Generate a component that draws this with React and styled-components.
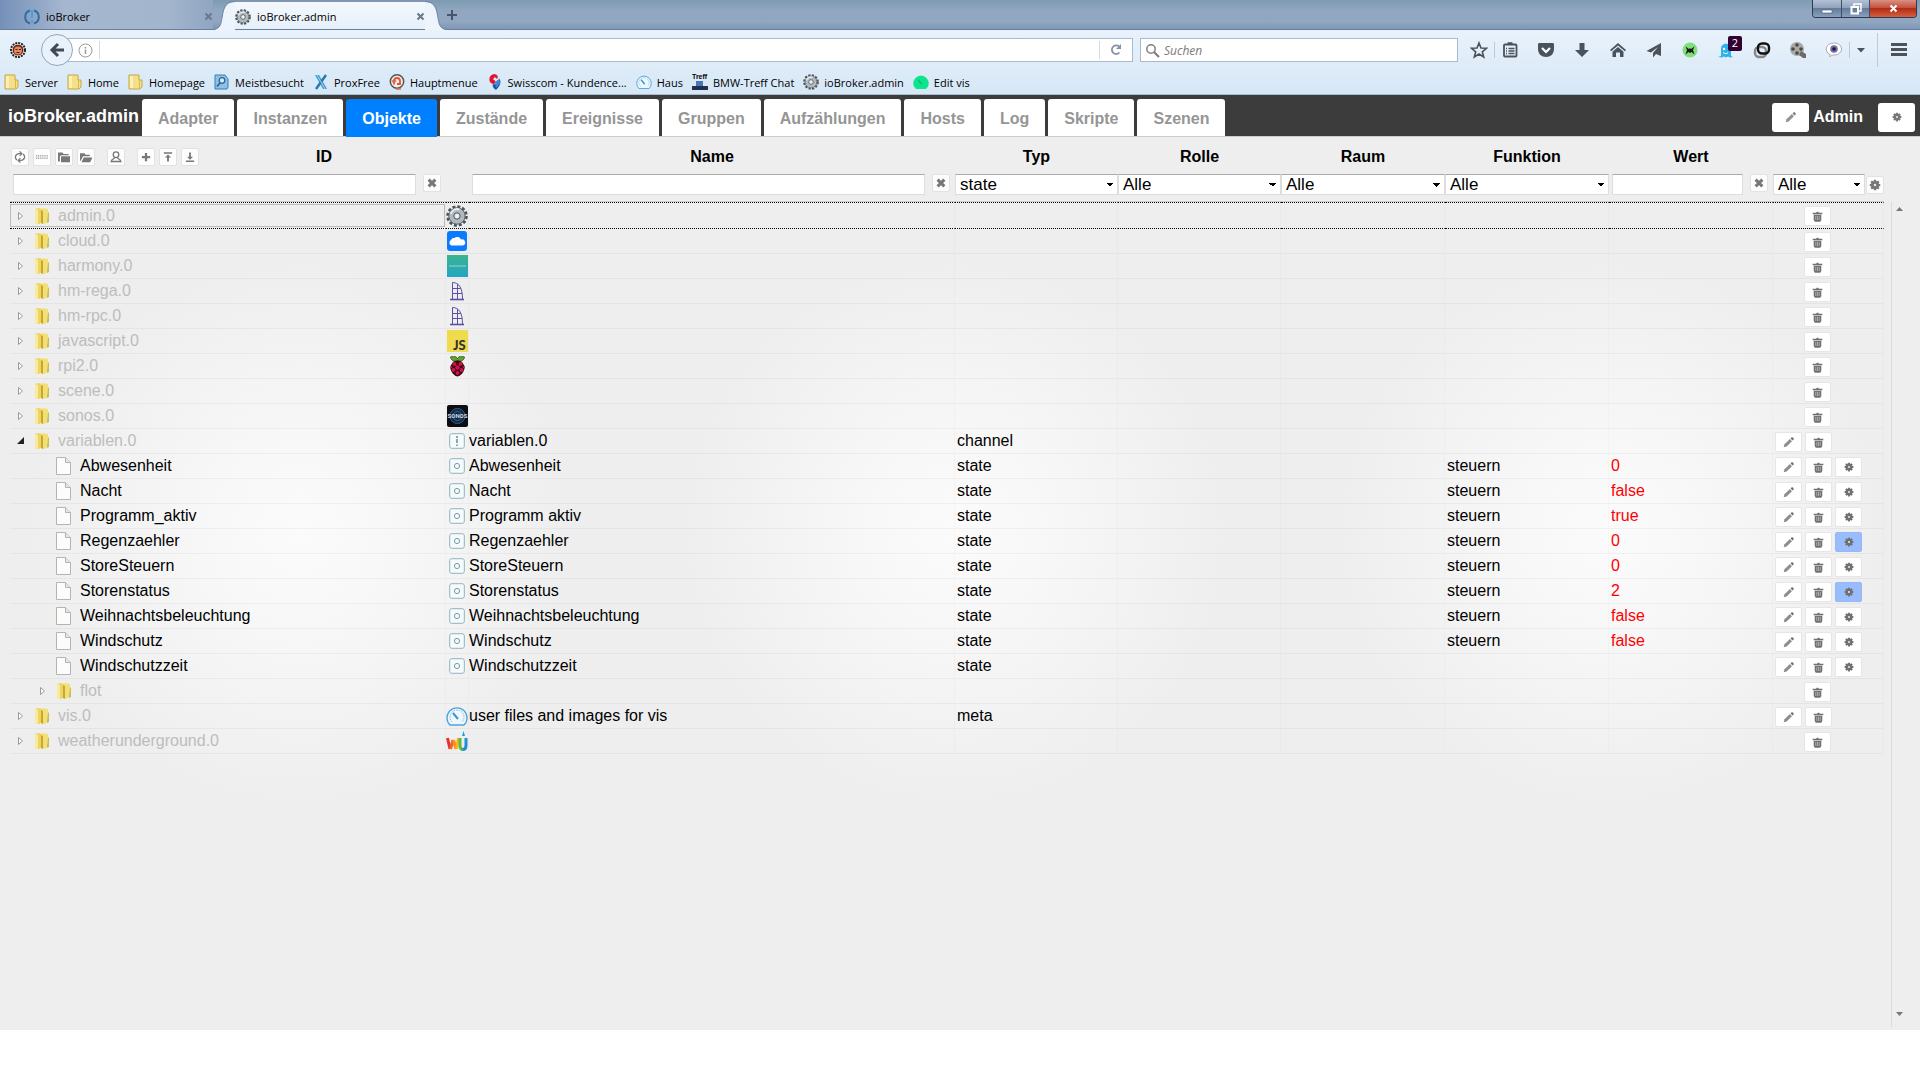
import styled, { createGlobalStyle, css } from 'styled-components';

const GlobalStyle = createGlobalStyle`
  *, *::before, *::after { box-sizing: border-box; }

  body {
    margin: 0;
    background: #fff;
    color: #000;
    font-family: 'Liberation Sans', Arial, sans-serif;
    font-size: 16px;
  }

  button, input, select { font: inherit; margin: 0; padding: 0; }
  button { border: 0; background: none; color: inherit; }
  a { color: inherit; text-decoration: none; }
  svg { display: block; flex: none; }
`;

const Page = styled.div`
  display: flex;
  flex-direction: column;
  min-height: 100vh;
  padding-bottom: 50px;
`;

/* ---------- browser window ---------- */

const chromeFont = css`
  font-family: 'Open Sans', 'Noto Sans', sans-serif;
  font-size: 11px;
`;

const TitleBar = styled.div`
  ${chromeFont}
  display: flex;
  height: 30px;
  border-bottom: 1px solid #66809f;
  background: linear-gradient(#7d9bb1, #92a8c2 40%, #90a6c1 75%, #7f97b5);
`;

const BrowserTab = styled.div`
  display: flex;
  align-items: center;
  gap: 6px;
  height: 29px;
  padding: 4px 0 0;
  width: ${(props) => (props.$active ? '190px' : '213px')};
  ${(props) =>
    props.$active
      ? 'background: linear-gradient(#f3f8fd, #e6f0fa); border-top: 2px solid #8196b0; padding-top: 2px;'
      : 'padding-left: 24px; background: linear-gradient(90deg, #7590b8, #a5b6cf 30%, #a3b4cd 80%, #8fa5c2);'}
`;

const TabTitle = styled.span`
  flex: 1;
`;

const TabClose = styled.button`
  display: flex;
`;

const NewTab = styled.button`
  display: flex;
  align-items: center;
`;

const WindowButtons = styled.div`
  display: flex;
  height: 18px;
  margin-left: auto;
  margin-right: 3px;
  border: 1px solid #2c3b52;
  border-top: 0;
  border-radius: 0 0 4px 4px;
  overflow: hidden;
`;

const WindowButton = styled.button`
  display: flex;
  align-items: center;
  justify-content: center;
  width: ${(props) => (props.$close ? '47px' : '28px')};
  border-left: ${(props) => (props.$first ? '0' : '1px solid #3d4d66')};
  background: ${(props) =>
    props.$close
      ? 'linear-gradient(#d99083, #c4513c 45%, #b32c14 50%, #d4603f)'
      : 'linear-gradient(#b3c1d3, #8fa3bc 45%, #647c9b 50%, #8aa0bb)'};
`;

const Chrome = styled.div`
  ${chromeFont}
  height: 65px;
  border-bottom: 1px solid #a9bccf;
  background: linear-gradient(#e9f2fb, #d6e7f6);
`;

const NavBar = styled.div`
  display: flex;
  align-items: center;
  height: 40px;
  padding: 0 12px 0 10px;
`;

const BackButton = styled.button`
  display: flex;
  align-items: center;
  justify-content: center;
  width: 32px;
  height: 32px;
  margin-left: 15px;
  margin-right: -12px;
  z-index: 1;
  border: 1px solid #93a6bb;
  border-radius: 50%;
  background: #e9f2fb;
`;

const UrlBar = styled.div`
  display: flex;
  align-items: center;
  flex: 1;
  height: 24px;
  padding-left: 16px;
  border: 1px solid #a8bacd;
  background: #fff;
`;

const UrlInput = styled.input`
  flex: 1;
  min-width: 0;
  height: 18px;
  margin-left: 6px;
  border: 0;
  border-left: 1px solid #d5dbe2;
  outline: 0;
`;

const Reload = styled.button`
  display: flex;
  align-items: center;
  justify-content: center;
  width: 33px;
  height: 18px;
  border-left: 1px solid #d5dbe2;
`;

const SearchBox = styled.label`
  display: flex;
  align-items: center;
  gap: 4px;
  width: 318px;
  height: 24px;
  margin: 0 12px 0 7px;
  padding-left: 4px;
  border: 1px solid #a8bacd;
  background: #fff;
`;

const SearchInput = styled.input`
  flex: 1;
  min-width: 0;
  border: 0;
  outline: 0;
  font-size: 12px;
  &::placeholder {
    color: #7a7a7a;
    font-style: italic;
    opacity: 1;
  }
`;

const ToolIcons = styled.div`
  display: flex;
  align-items: center;
  gap: 18px;
`;

const ToolIcon = styled.button`
  position: relative;
  display: flex;
  align-items: center;
  justify-content: center;
  width: 18px;
  height: 18px;
`;

const StarGroup = styled.div`
  display: flex;
  align-items: center;
  gap: 6px;
  margin-right: -12px;
`;

const Separator = styled.span`
  width: 1px;
  height: ${(props) => (props.$tall ? '34px' : '16px')};
  background: #bccbdb;
`;

const Badge = styled.span`
  position: absolute;
  left: 11px;
  top: -5px;
  width: 14px;
  height: 15px;
  border-radius: 2px;
  background: #330033;
  color: #fff;
  line-height: 14px;
`;

const MenuEnd = styled.div`
  display: flex;
  align-items: center;
  gap: 12px;
  margin-left: -12px;
`;

const OverflowButton = styled.button`
  display: flex;
  margin-left: -5px;
`;

const Bookmarks = styled.nav`
  display: flex;
  align-items: center;
  gap: 9px;
  height: 24px;
  padding-left: 4px;
`;

const Bookmark = styled.a`
  display: flex;
  align-items: center;
  gap: 5px;
  white-space: nowrap;
`;

/* ---------- application ---------- */

const Header = styled.header`
  display: flex;
  align-items: flex-end;
  height: 42px;
  padding: 0 5px 0 8px;
  background: #3c3c3c;
  border-bottom: 1px solid #ccc;
`;

const Brand = styled.h1`
  width: 134px;
  margin: 0;
  color: #fff;
  font-size: 18px;
  line-height: 20px;
  padding-bottom: 10px;
`;

const Tabs = styled.nav`
  display: flex;
  gap: 3px;
  flex: 1;
`;

const Tab = styled.a`
  height: 37px;
  padding: 0 16px;
  border-radius: 3px 3px 0 0;
  background: ${(props) => (props.$active ? '#007fff' : '#fff')};
  color: ${(props) => (props.$active ? '#fff' : '#959595')};
  font-weight: bold;
  line-height: 39px;
  margin-bottom: ${(props) => (props.$active ? '-1px' : '0')};
  ${(props) => props.$active && 'height: 38px;'}
`;

const UserArea = styled.div`
  display: flex;
  align-items: center;
  align-self: center;
  padding-top: 3px;
  color: #fff;
  font-weight: bold;
`;

const HeaderButton = styled.button`
  display: flex;
  align-items: center;
  justify-content: center;
  width: 37px;
  height: 29px;
  border-radius: 3px;
  background: #fff;
  color: #777;
`;

const UserName = styled.span`
  padding: 0 15px 0 4px;
`;

const Main = styled.main`
  display: flex;
  flex: 1;
  padding: 3px 0 3px 10px;
  background: radial-gradient(
      circle 275px at 328px 395px,
      #fbfbfb,
      #f8f8f8 30%,
      #eee
    )
    -28px 0 / 655px 100% repeat-x;
`;

const TreeArea = styled.div`
  flex: 1;
  min-width: 0;
`;

const Table = styled.table`
  width: 100%;
  table-layout: fixed;
  border-spacing: 0;
`;

const Col = styled.col`
  width: ${(props) => props.$width};
`;

const HeadCell = styled.th`
  height: 34px;
  padding: 0;
`;

const HeadFlex = styled.div`
  display: flex;
  align-items: center;
`;

const HeadLabel = styled.span`
  flex: 1;
  text-align: center;
`;

const Toolbar = styled.div`
  display: flex;
  gap: ${(props) => (props.$inner ? '4px' : '12px')};
  ${(props) => !props.$inner && 'width: 192px; padding-left: 1px;'}
`;

const SmallButton = styled.button`
  display: flex;
  align-items: center;
  justify-content: center;
  flex: none;
  width: 18px;
  height: 18px;
  border: 1px solid #e2e2e2;
  border-radius: 2px;
  background: #fdfdfd;
  color: #777;
`;

const FilterCell = styled.td`
  height: 28px;
  padding: 0;
  vertical-align: top;
  border-bottom: 1px solid #ccc;
`;

const FilterRow = styled.div`
  display: flex;
  gap: ${(props) => (props.$tight ? '1px' : '7px')};
  padding: ${(props) => (props.$tight ? '0' : '0 5px 0 3px')};
  align-items: ${(props) => (props.$tight ? 'center' : 'flex-start')};
`;

const FilterInput = styled.input`
  flex: 1;
  min-width: 0;
  height: 21px;
  padding: 0 4px;
  border: 1px solid #ddd;
  border-top-color: #aaa;
  background: #fff;
`;

const FilterSelect = styled.select`
  flex: 1;
  width: 100%;
  min-width: 0;
  height: 21px;
  padding: 0 4px;
  appearance: none;
  border: 1px solid #ddd;
  border-top-color: #aaa;
  border-radius: 0;
  background: linear-gradient(to bottom left, #000 50%, transparent 50%) right
      7px center / 4px 4px no-repeat,
    linear-gradient(to bottom right, #000 50%, transparent 50%) right 3px
      center / 4px 4px no-repeat,
    #fff;
  color: #000;
  font-size: 17px;
  line-height: 19px;
`;

const Cell = styled.td`
  height: 25px;
  padding: 0 0 0 ${(props) => (props.$flush ? '0' : '2px')};
  border-bottom: 1px solid rgba(0, 0, 0, 0.035);
  border-right: 1px solid rgba(0, 0, 0, 0.02);
  line-height: 20px;
  white-space: nowrap;
  overflow: hidden;
`;

const Row = styled.tr`
  ${(props) =>
    props.$focused &&
    css`
      ${Cell} {
        height: 27px;
        border-top: 1px dotted #000;
        border-bottom: 1px dotted #000;
      }
    `}
`;

const TreeNode = styled.div`
  display: flex;
  align-items: center;
  height: 23px;
  padding-left: ${(props) => (props.$level ? '28px' : '6px')};
  border: 1px solid ${(props) => (props.$focused ? '#bbb' : 'transparent')};
  color: ${(props) => (props.$folder ? '#bdbdbd' : '#000')};
`;

const Expander = styled.button`
  display: flex;
  align-items: center;
  width: 17px;
  height: 16px;
`;

const NodeIcon = styled.span`
  display: flex;
  width: 16px;
  margin-right: 8px;
`;

const IconBox = styled.div`
  display: flex;
  align-items: center;
  justify-content: center;
  height: 22px;
`;

const ValueCell = styled(Cell)`
  color: #f00;
`;

const Actions = styled.div`
  display: flex;
  gap: 3px;
  padding-top: 1px;
`;

const ActionButton = styled.button`
  display: flex;
  align-items: center;
  justify-content: center;
  width: 27px;
  height: 20px;
  padding-top: 1px;
  border: 1px solid ${(props) => (props.$on ? '#94b8f8' : '#e6e6e6')};
  border-radius: 2px;
  background: ${(props) => (props.$on ? '#99bdfc' : '#fff')};
  color: #707070;
`;

const ActionSpacer = styled.span`
  width: 26px;
`;

const ScrollBar = styled.div`
  display: flex;
  flex-direction: column;
  justify-content: space-between;
  width: 29px;
  margin-top: 62px;
  margin-left: 7px;
  padding: 2px 0 8px 2px;
  border-left: 1px solid #dcdcdc;
  background: #eee;
`;

const ScrollButton = styled.button`
  display: flex;
  align-items: center;
  justify-content: center;
  width: 10px;
  height: 10px;
`;

/* ---------- icons ---------- */

const glyphs = {
  refresh: (
    <g fill="none" stroke="currentColor" strokeWidth="1.6">
      <path d="M4 12C0 9 2 3.5 7 3.5h2.500M12 4C16 7 14 12.500 9 12.500H6.500" />
      <path d="M7.500 .5l3 3-3 3M8.500 15.500l-3-3 3-3" />
    </g>
  ),
  list: (
    <path
      d="M0 6.500h16M0 9.500h16"
      stroke="currentColor"
      strokeWidth="1.300"
      strokeDasharray="1.500 1"
    />
  ),
  folder: (
    <g fill="currentColor">
      <path d="M0 2h6l1.500 2H14v1.500H4L2.500 7v7H0z" />
      <path d="M4 7h12v8H4z" />
    </g>
  ),
  folderOpen: (
    <g fill="currentColor">
      <path d="M0 3h6l1.500 2H13v2H4l-3 6H0z" />
      <path d="M5 8.500h11.500L13.500 15H2z" />
    </g>
  ),
  person: (
    <g fill="none" stroke="currentColor" strokeWidth="1.700">
      <circle cx="8" cy="5" r="3.700" />
      <path d="M6 8.500c0 2.500-4 2-4.500 5.500h13c-.5-3.500-4.500-3-4.500-5.500M1 14h14" />
    </g>
  ),
  plus: <path d="M6.500 2.500h3v4h4v3h-4v4h-3v-4h-4v-3h4z" fill="currentColor" />,
  stopUp: (
    <path
      d="M2.500 1.500h11v2h-11zM8 4.500l4 4H9.200V14H6.800V8.500H4z"
      fill="currentColor"
    />
  ),
  stopDown: (
    <path
      d="M2.500 12.500h11v2h-11zM8 11.500l-4-4h2.800V2h2.400v5.500H12z"
      fill="currentColor"
    />
  ),
  close: (
    <path
      d="M3.500 3.500l9 9M12.500 3.500l-9 9"
      stroke="currentColor"
      strokeWidth="4"
    />
  ),
  pencil: (
    <g fill="currentColor">
      <path d="M1 15l1.200-4.300L10 3l3 3-7.700 7.800z" opacity=".8" />
      <path d="M11 2l1.500-1.500h1.500l1.500 1.500v1.500L14 5z" />
    </g>
  ),
  trash: (
    <g fill="currentColor">
      <path d="M1 2.500H6l1-1.500h2l1 1.500h5v2.300H1z" />
      <path d="M2.500 5.500h11V13l-1.500 2.500H4L2.500 13z" />
      <path d="M5.500 7v6M8 7v6M10.500 7v6" stroke="#ddd" strokeWidth=".8" />
    </g>
  ),
  gear: (
    <g>
      <path
        d="M8 1v14M1 8h14M3 3l10 10M13 3L3 13"
        stroke="currentColor"
        strokeWidth="3"
      />
      <circle cx="8" cy="8" r="4" fill="none" stroke="currentColor" strokeWidth="3" />
      <circle cx="8" cy="8" r="1.600" fill="#eee" />
    </g>
  ),
};

function Glyph({ name, size = 12 }) {
  return (
    <svg width={size} height={size} viewBox="0 0 16 16" aria-hidden="true">
      {glyphs[name]}
    </svg>
  );
}

function FolderIcon() {
  return (
    <svg width="16" height="18" viewBox="0 0 16 18">
      <path d="M1 2l4-1 3 1v13l-3 2-4-1z" fill="#ecd465" />
      <path d="M1 2l3 1v14l-3-1z" fill="#f8ec9c" />
      <path d="M7 3l2-2 5 1v13l-4 2-3-1z" fill="#f3df78" />
      <path d="M7 3l2 1v13l-2-1z" fill="#c8a72c" />
      <path d="M14 5l1 1v9l-2 1z" fill="#d9bb44" />
      <path d="M13 12h2v2h-2z" fill="#9cc7a0" />
    </svg>
  );
}

function PageIcon() {
  return (
    <svg width="15" height="18" viewBox="0 0 15 18">
      <path d="M.5 .5h9l5 5v12H.5z" fill="#fcfcfa" stroke="#b4b4b4" />
      <path d="M9.500 .5v5h5" fill="#e6e6e6" stroke="#b4b4b4" />
    </svg>
  );
}

function ExpanderIcon({ open }) {
  return (
    <svg width="8" height="10" viewBox="0 0 8 10">
      {open ? (
        <path d="M7 1v7H0z" fill="#222" />
      ) : (
        <path d="M1.500 1.500v7l4-3.500z" fill="#fff" stroke="#9a9a9a" />
      )}
    </svg>
  );
}

function CogLogo({ size = 22 }) {
  return (
    <svg width={size} height={size} viewBox="0 0 22 22">
      <circle
        cx="11"
        cy="11"
        r="9"
        fill="none"
        stroke="#4d5358"
        strokeWidth="3.500"
        strokeDasharray="2.900 1.812"
      />
      <circle cx="11" cy="11" r="8.200" fill="#b0b8c0" stroke="#5d646b" />
      <path d="M4.500 9a7 7 0 0 1 9-4.500" stroke="#e6eaee" strokeWidth="2" fill="none" />
      <circle cx="11" cy="11" r="3.200" fill="#e3e7ea" stroke="#4d5358" />
      <circle cx="11" cy="11" r="1" fill="#fff" />
    </svg>
  );
}

function GaugeLogo({ size = 22, filled }) {
  return (
    <svg width={size} height={size} viewBox="0 0 22 22">
      <path
        d="M4 20a10 10 0 1 1 14 0z"
        fill={filled ? '#0be58d' : '#eef7fd'}
        stroke={filled ? '#0be58d' : '#4fa3dc'}
        strokeWidth="1.300"
      />
      {!filled && (
        <path
          d="M6 17a7 7 0 1 1 10 0"
          fill="none"
          stroke="#7cbbe6"
          strokeDasharray="1.500 1"
        />
      )}
      <path
        d="M7 8l5 6"
        stroke={filled ? '#17b877' : '#3f94d0'}
        strokeWidth="2"
      />
    </svg>
  );
}

const adapterIcons = {
  admin: <CogLogo />,
  cloud: (
    <svg width="20" height="20" viewBox="0 0 20 20">
      <rect width="20" height="20" rx="3" fill="#0a7bff" />
      <path
        d="M4.500 14.500a3 3 0 0 1-.5-5.500 3 3 0 0 1 3.500-2 4 4 0 0 1 6.500 1.500 3 3 0 0 1 2 6z"
        fill="#fff"
      />
    </svg>
  ),
  harmony: (
    <svg width="21" height="22" viewBox="0 0 21 22">
      <defs>
        <linearGradient id="harmony" x2="0" y2="1">
          <stop offset="0" stopColor="#3bb38e" />
          <stop offset="1" stopColor="#22a5c4" />
        </linearGradient>
      </defs>
      <rect width="21" height="22" fill="url(#harmony)" />
      <path d="M2 11h17" stroke="#8fd6d0" />
    </svg>
  ),
  homematic: (
    <svg width="16" height="20" viewBox="0 0 16 20">
      <g fill="none" stroke="#5d4fa3">
        <path d="M3.500 18V1.500C10 1.500 13.500 7 13.500 18" />
        <path d="M8.500 3v15M3 7.500h8.500M3 12.500h10" />
        <path d="M1 18.500h14" strokeWidth="1.600" />
      </g>
    </svg>
  ),
  javascript: (
    <svg width="21" height="22" viewBox="0 0 21 22">
      <rect width="21" height="22" fill="#f0db4f" />
      <text
        x="6"
        y="20"
        fontFamily="Lato, sans-serif"
        fontWeight="900"
        fontSize="13"
        fill="#323330"
      >
        JS
      </text>
    </svg>
  ),
  rpi: (
    <svg width="17" height="21" viewBox="0 0 17 21">
      <path
        d="M8.500 5C6 6 2 5 1.500 1 4-.5 7 0 8.500 2.500 10 0 13-.5 15.500 1 15 5 11 6 8.500 5z"
        fill="#5aa52e"
        stroke="#26350f"
        strokeWidth=".7"
      />
      <path
        d="M8.500 4.500c3 0 5 1.500 6 4 2 2 1 5 0 7-1 2-4 5-6 5s-5-3-6-5c-1-2-2-5 0-7 1-2.500 3-4 6-4z"
        fill="#3a0614"
      />
      <g fill="#d2134a">
        <circle cx="5.500" cy="8" r="2" />
        <circle cx="11.500" cy="8" r="2" />
        <circle cx="8.500" cy="11.500" r="2.200" />
        <circle cx="4.500" cy="14" r="2" />
        <circle cx="12.500" cy="14" r="2" />
        <circle cx="8.500" cy="17" r="2" />
        <circle cx="2.500" cy="11" r="1" />
        <circle cx="14.500" cy="11" r="1" />
      </g>
    </svg>
  ),
  sonos: (
    <svg width="21" height="22" viewBox="0 0 21 22">
      <rect width="21" height="22" rx="2" fill="#0b0d11" />
      <circle cx="10.500" cy="11" r="7.500" fill="#14293e" stroke="#2c5f8c" />
      <circle cx="10.500" cy="11" r="4.500" fill="none" stroke="#2c6aa0" />
      <text
        x="10.500"
        y="13"
        textAnchor="middle"
        fontFamily="Roboto, sans-serif"
        fontWeight="bold"
        fontSize="6"
        fill="#c9d6e2"
      >
        SONOS
      </text>
    </svg>
  ),
  channel: (
    <svg width="16" height="16" viewBox="0 0 16 16">
      <rect x=".7" y=".7" width="14.600" height="14.600" rx="2" fill="#f6fafb" stroke="#8fb3bf" />
      <path d="M8 3v2M8 6v4M8 11.500v1.500" stroke="#3f7f95" strokeWidth="1.300" />
    </svg>
  ),
  state: (
    <svg width="16" height="16" viewBox="0 0 16 16">
      <rect x=".7" y=".7" width="14.600" height="14.600" rx="2" fill="#f6fafb" stroke="#8fb3bf" />
      <circle cx="8" cy="8" r="2.600" fill="none" stroke="#6f9fae" />
    </svg>
  ),
  vis: <GaugeLogo />,
  wu: (
    <svg width="22" height="20" viewBox="0 0 22 20" fill="none" strokeWidth="3">
      <path d="M1.500 7l2.500 11" stroke="#e5312b" />
      <path d="M4.500 18l2.500-9" stroke="#f0622a" />
      <path d="M7.500 9l2.500 9" stroke="#f78f1e" />
      <path d="M10.500 18l2-11" stroke="#fbb615" />
      <path d="M14 7v7c0 3 1 4.500 3 4.500" stroke="#5cb947" />
      <path d="M16.500 18.500c2.500 0 3.500-1.500 3.500-4V7" stroke="#1e8fd5" />
      <path d="M17.500 0l1.500 5h-3z" fill="#1e9fe0" />
    </svg>
  ),
};

/* ---------- data ---------- */

const bookmarkIcons = {
  folder: (
    <svg width="16" height="16" viewBox="0 0 16 16">
      <path d="M1 1h10v5h3v7l-2 2H1z" fill="#f5e08a" stroke="#c9a63f" />
      <path d="M11.500 6v9" stroke="#d9b94e" />
      <path d="M2 2h3v12H2z" fill="#fbf0b5" />
    </svg>
  ),
  smart: (
    <svg width="16" height="16" viewBox="0 0 16 16">
      <path d="M1 1h10l3 4v8l-1 2H1z" fill="#8fc0e6" stroke="#3d7db3" />
      <circle cx="8" cy="6.500" r="2.800" fill="#d5eaf9" stroke="#2a679c" strokeWidth="1.300" />
      <path d="M6 9l-3 3.500" stroke="#2a679c" strokeWidth="1.800" />
    </svg>
  ),
  prox: (
    <svg width="16" height="16" viewBox="0 0 16 16">
      <path d="M2 1h4l8 14h-4z" fill="#3f9bd0" />
      <path d="M13 1L3 15" stroke="#2d77ad" strokeWidth="2.500" />
      <path d="M4 1l8 14" stroke="#a5d5f0" />
    </svg>
  ),
  at: (
    <svg width="16" height="16" viewBox="0 0 16 16" fill="none">
      <circle cx="8" cy="7.500" r="6.700" fill="#f2eeec" stroke="#555" strokeWidth="1.500" />
      <path d="M5 10.500V7a3 3 0 0 1 6 0v3H8" stroke="#dd5733" strokeWidth="1.800" />
      <path d="M3 6.500l2 2.500 2-2.500M7 15h5" stroke="#e06a4a" strokeWidth="1.300" />
    </svg>
  ),
  swisscom: (
    <svg width="16" height="16" viewBox="0 0 16 16">
      <path d="M7 0C1 1 1 9 6 10c4 0 3-4 0-4.500C7 2.500 9 3 10 5c2-2 0-5-3-5z" fill="#e2152c" />
      <path d="M12 4c3 4 1 8-3 12-3-2-4-4-3-6 4 1 7-2 6-6z" fill="#1459a8" />
      <path d="M8 8l4-3 1 4-4 5z" fill="#3f8bd6" />
    </svg>
  ),
  haus: <GaugeLogo size={16} />,
  bmw: (
    <svg width="16" height="16" viewBox="0 0 16 16">
      <text x="0" y="5" fontFamily="Liberation Sans, sans-serif" fontWeight="bold" fontSize="7" fill="#000">
        Treff
      </text>
      <path d="M4 7h7v6H4z" fill="#4379b6" />
      <path d="M0 12h16v4H0z" fill="#22304b" />
    </svg>
  ),
  cog: <CogLogo size={16} />,
  edit: <GaugeLogo size={16} filled />,
};

const bookmarks = [
  ['folder', 'Server'],
  ['folder', 'Home'],
  ['folder', 'Homepage'],
  ['smart', 'Meistbesucht'],
  ['prox', 'ProxFree'],
  ['at', 'Hauptmenue'],
  ['swisscom', 'Swisscom - Kundence...'],
  ['haus', 'Haus'],
  ['bmw', 'BMW-Treff Chat'],
  ['cog', 'ioBroker.admin'],
  ['edit', 'Edit vis'],
];

const ink = '#4a525b';

const toolIcons = [
  [
    'Lesezeichen',
    <g key="i" fill="none" stroke={ink} strokeWidth="1.800">
      <rect x="3" y="3.500" width="12.500" height="12" rx="1" />
      <path d="M6.500 2.500h5" strokeWidth="2.500" />
      <path d="M7.500 7.500h6M7.500 10h6M7.500 12.500h6M5 7.500h1M5 10h1M5 12.500h1" strokeWidth="1.300" />
    </g>,
  ],
  [
    'Pocket',
    <g key="i">
      <path d="M1 3.500C1 2.500 1.500 2 2.500 2h13c1 0 1.500.5 1.500 1.500V8c0 5-3.500 8-8 8s-8-3-8-8z" fill={ink} />
      <path d="M5 7l4 4 4-4" fill="none" stroke="#fff" strokeWidth="2.200" />
    </g>,
  ],
  [
    'Downloads',
    <path key="i" d="M6.500 2h5v7H16l-7 7-7-7h4.500z" fill={ink} />,
  ],
  [
    'Startseite',
    <g key="i" fill={ink}>
      <path d="M9 2l8 7-1.200 1.300L9 4.500l-6.800 5.800L1 9z" />
      <path d="M9 6l5.500 4.700V16h-3.500v-4.500H7V16H3.500v-5.300z" />
    </g>,
  ],
  [
    'Senden',
    <path key="i" d="M16 2v13l-5-2-3 3.500V12l5-6-7 5.500L1.500 10z" fill={ink} />,
  ],
  [
    'Erweiterung',
    <g key="i">
      <circle cx="9" cy="9" r="7.500" fill="#7fe07a" />
      <path d="M4.500 5.500L8 8l1-1 1 1 3.500-2.500-1.500 3.500 1.500 4.500L10.500 11 9 12l-1.500-1-3 2.500L6 9z" fill="#1c1c1c" />
    </g>,
  ],
  [
    'Ghostery',
    <g key="i">
      <path d="M4 8c0-7 10-7 10 0v7l2 1-3 .5-2-1-2 1-2-1-2 1-4-.5 3-1z" fill="#2fb1ea" />
      <circle cx="7" cy="8" r="1.200" fill="#fff" />
      <path d="M6 11.500c2 1.500 4 1.500 5 0" stroke="#fff" fill="none" />
    </g>,
    '2',
  ],
  [
    'Link',
    <g key="i" fill="none" strokeWidth="2.400">
      <rect x="2" y="6" width="11" height="10" rx="4" stroke="#888" />
      <rect x="5" y="2.500" width="11" height="10" rx="4" stroke="#111" />
    </g>,
  ],
  [
    'Video',
    <g key="i">
      <circle cx="8" cy="8" r="7" fill="#a9a9a6" />
      <g fill="#4a4a4a">
        <circle cx="8" cy="4" r="1.800" />
        <circle cx="4" cy="8" r="1.800" />
        <circle cx="12" cy="8" r="1.800" />
        <circle cx="8" cy="12" r="1.800" />
      </g>
      <path d="M12 10l5 3v4h-3l-4-3z" fill="#6e6a66" />
    </g>,
  ],
  [
    'Augen',
    <g key="i">
      <path d="M9 2c10 0 10 12 0 12-2 0-3 0-4 2v-2.500C-1 11 0 2 9 2z" fill="#fff" stroke="#a9a9a9" />
      <circle cx="9" cy="8" r="3.800" fill="#766da8" />
      <circle cx="9" cy="8" r="1.800" fill="#20183a" />
    </g>,
  ],
];

const tabs = [
  'Adapter',
  'Instanzen',
  'Objekte',
  'Zustände',
  'Ereignisse',
  'Gruppen',
  'Aufzählungen',
  'Hosts',
  'Log',
  'Skripte',
  'Szenen',
];

const rows = [
  { id: 'admin.0', folder: true, icon: 'admin', focused: true },
  { id: 'cloud.0', folder: true, icon: 'cloud' },
  { id: 'harmony.0', folder: true, icon: 'harmony' },
  { id: 'hm-rega.0', folder: true, icon: 'homematic' },
  { id: 'hm-rpc.0', folder: true, icon: 'homematic' },
  { id: 'javascript.0', folder: true, icon: 'javascript' },
  { id: 'rpi2.0', folder: true, icon: 'rpi' },
  { id: 'scene.0', folder: true },
  { id: 'sonos.0', folder: true, icon: 'sonos' },
  { id: 'variablen.0', folder: true, open: true, icon: 'channel', name: 'variablen.0', type: 'channel' },
  { id: 'Abwesenheit', func: 'steuern', value: '0' },
  { id: 'Nacht', func: 'steuern', value: 'false' },
  { id: 'Programm_aktiv', name: 'Programm aktiv', func: 'steuern', value: 'true' },
  { id: 'Regenzaehler', func: 'steuern', value: '0', custom: true },
  { id: 'StoreSteuern', func: 'steuern', value: '0' },
  { id: 'Storenstatus', func: 'steuern', value: '2', custom: true },
  { id: 'Weihnachtsbeleuchtung', func: 'steuern', value: 'false' },
  { id: 'Windschutz', func: 'steuern', value: 'false' },
  { id: 'Windschutzzeit' },
  { id: 'flot', folder: true, level: 1 },
  { id: 'vis.0', folder: true, icon: 'vis', name: 'user files and images for vis', type: 'meta' },
  { id: 'weatherunderground.0', folder: true, icon: 'wu' },
];

/* ---------- components ---------- */

function TabCurve({ flip }) {
  return (
    <svg width="22" height="30" viewBox="0 0 22 30">
      <g transform={flip ? 'translate(22 0) scale(-1 1)' : undefined}>
        <path d="M0 30C8 29 8 23 9.500 15 11 6 14 2 22 2v28z" fill="#edf4fb" />
        <path
          d="M0 29.500C8 29 8 23 9.500 15 11 6 14 1.500 22 1.500"
          fill="none"
          stroke="#6d84a2"
        />
      </g>
    </svg>
  );
}

function CloseMark({ color = '#6b7789' }) {
  return (
    <svg width="9" height="9" viewBox="0 0 9 9">
      <path d="M1.500 1.500l6 6M7.500 1.500l-6 6" stroke={color} strokeWidth="2" />
    </svg>
  );
}

function BrowserChrome() {
  return (
    <>
      <TitleBar>
        <BrowserTab>
          <svg width="16" height="16" viewBox="0 0 16 16" fill="none">
            <path d="M6 1.500a6.800 6.800 0 0 0 0 13M10 1.500a6.800 6.800 0 0 1 0 13" stroke="#2f6da3" strokeWidth="2" />
            <path d="M8 1v8M8 11v3" stroke="#4aa0dc" strokeWidth="2" />
          </svg>
          <TabTitle>ioBroker</TabTitle>
          <TabClose aria-label="Tab schließen">
            <CloseMark />
          </TabClose>
        </BrowserTab>
        <TabCurve />
        <BrowserTab $active>
          <CogLogo size={16} />
          <TabTitle>ioBroker.admin</TabTitle>
          <TabClose aria-label="Tab schließen">
            <CloseMark />
          </TabClose>
        </BrowserTab>
        <TabCurve flip />
        <NewTab aria-label="Neuer Tab">
          <svg width="10" height="10" viewBox="0 0 10 10">
            <path d="M5 0v10M0 5h10" stroke="#46556b" strokeWidth="2" />
          </svg>
        </NewTab>
        <WindowButtons>
          <WindowButton $first aria-label="Minimieren">
            <svg width="12" height="12" viewBox="0 0 12 12">
              <path d="M1 7h10v3H1z" fill="#fff" stroke="#45556e" strokeWidth=".6" />
            </svg>
          </WindowButton>
          <WindowButton aria-label="Wiederherstellen">
            <svg width="12" height="12" viewBox="0 0 12 12" fill="none">
              <path d="M4 3V1h7v7H9" stroke="#fff" strokeWidth="1.500" />
              <path d="M1.500 4h6.500v6.500H1.500z" stroke="#fff" strokeWidth="2" />
            </svg>
          </WindowButton>
          <WindowButton $close aria-label="Schließen">
            <CloseMark color="#fff" />
          </WindowButton>
        </WindowButtons>
      </TitleBar>

      <Chrome>
        <NavBar>
          <svg width="16" height="16" viewBox="0 0 16 16">
            <circle cx="8" cy="8" r="7" fill="#fff" stroke="#222" strokeWidth="2" strokeDasharray="2 1" />
            <circle cx="8" cy="8" r="5.500" fill="#6e2a17" />
            <circle cx="8" cy="8.500" r="4" fill="#e08a60" />
            <path d="M5.500 7.500h2M9 7.500h2M6.500 10.500h3" stroke="#4b1a10" />
          </svg>
          <BackButton aria-label="Zurück">
            <svg width="16" height="16" viewBox="0 0 16 16">
              <path d="M9 2L3 8l6 6M3 8h12" fill="none" stroke="#3f4a56" strokeWidth="3" />
            </svg>
          </BackButton>
          <UrlBar>
            <svg width="15" height="15" viewBox="0 0 15 15" fill="none" stroke="#999">
              <circle cx="7.500" cy="7.500" r="6.500" />
              <path d="M7.500 6.500v4.500M7.500 4v1.500" strokeWidth="1.500" />
            </svg>
            <UrlInput aria-label="Adresse" />
            <Reload aria-label="Neu laden">
              <svg width="12" height="12" viewBox="0 0 12 12">
                <path d="M9.500 8.500A4.300 4.300 0 1 1 9.500 3" fill="none" stroke="#8392a5" strokeWidth="1.800" />
                <path d="M11 0v5H6z" fill="#8392a5" />
              </svg>
            </Reload>
          </UrlBar>
          <SearchBox>
            <svg width="15" height="15" viewBox="0 0 15 15" fill="none" stroke="#808080">
              <circle cx="6" cy="6" r="4.200" strokeWidth="1.500" />
              <path d="M9 9l5 5" strokeWidth="2.200" />
            </svg>
            <SearchInput aria-label="Suchen" placeholder="Suchen" />
          </SearchBox>
          <ToolIcons>
            <StarGroup>
              <ToolIcon aria-label="Lesezeichen hinzufügen">
                <svg width="18" height="18" viewBox="0 0 18 18">
                  <path
                    d="M9 2l2 5 5.500.3-4.200 3.500 1.400 5.200L9 13l-4.700 3 1.400-5.200L1.500 7.300 7 7z"
                    fill="none"
                    stroke={ink}
                    strokeWidth="1.600"
                  />
                </svg>
              </ToolIcon>
              <Separator />
            </StarGroup>
            {toolIcons.map(([label, drawing, badge]) => (
              <ToolIcon key={label} aria-label={label}>
                <svg width="18" height="18" viewBox="0 0 18 18">
                  {drawing}
                </svg>
                {badge && <Badge>{badge}</Badge>}
              </ToolIcon>
            ))}
            <MenuEnd>
              <Separator />
              <OverflowButton aria-label="Weitere Werkzeuge">
                <svg width="8" height="5" viewBox="0 0 8 5">
                  <path d="M0 0h8L4 4.500z" fill={ink} />
                </svg>
              </OverflowButton>
              <Separator $tall />
              <ToolIcon aria-label="Menü">
                <svg width="16" height="14" viewBox="0 0 16 14">
                  <path d="M0 1.500h16M0 6.500h16M0 11.500h16" stroke={ink} strokeWidth="3" />
                </svg>
              </ToolIcon>
            </MenuEnd>
          </ToolIcons>
        </NavBar>
        <Bookmarks>
          {bookmarks.map(([icon, label]) => (
            <Bookmark key={label} href="#">
              {bookmarkIcons[icon]}
              {label}
            </Bookmark>
          ))}
        </Bookmarks>
      </Chrome>
    </>
  );
}

function IconButton({ name, label }) {
  return (
    <SmallButton aria-label={label} title={label}>
      <Glyph name={name} />
    </SmallButton>
  );
}

function Filter({ label, value }) {
  return (
    <FilterSelect aria-label={label} defaultValue={value}>
      <option>{value}</option>
    </FilterSelect>
  );
}

function TextFilter({ label }) {
  return (
    <FilterRow>
      <FilterInput aria-label={label} />
      <IconButton name="close" label={`${label} leeren`} />
    </FilterRow>
  );
}

function TableHead() {
  return (
    <thead>
      <tr>
        <HeadCell>
          <HeadFlex>
            <Toolbar>
              <Toolbar $inner>
                <IconButton name="refresh" label="Aktualisieren" />
                <IconButton name="list" label="Liste" />
                <IconButton name="folder" label="Alle zuklappen" />
                <IconButton name="folderOpen" label="Alle aufklappen" />
              </Toolbar>
              <IconButton name="person" label="Expertenmodus" />
              <Toolbar $inner>
                <IconButton name="plus" label="Hinzufügen" />
                <IconButton name="stopUp" label="Hochladen" />
                <IconButton name="stopDown" label="Herunterladen" />
              </Toolbar>
            </Toolbar>
            <HeadLabel>ID</HeadLabel>
          </HeadFlex>
        </HeadCell>
        <HeadCell />
        <HeadCell>Name</HeadCell>
        <HeadCell>Typ</HeadCell>
        <HeadCell>Rolle</HeadCell>
        <HeadCell>Raum</HeadCell>
        <HeadCell>Funktion</HeadCell>
        <HeadCell>Wert</HeadCell>
        <HeadCell />
      </tr>
      <tr>
        <FilterCell>
          <TextFilter label="ID" />
        </FilterCell>
        <FilterCell />
        <FilterCell>
          <TextFilter label="Name" />
        </FilterCell>
        <FilterCell>
          <Filter label="Typ" value="state" />
        </FilterCell>
        <FilterCell>
          <Filter label="Rolle" value="Alle" />
        </FilterCell>
        <FilterCell>
          <Filter label="Raum" value="Alle" />
        </FilterCell>
        <FilterCell>
          <Filter label="Funktion" value="Alle" />
        </FilterCell>
        <FilterCell>
          <TextFilter label="Wert" />
        </FilterCell>
        <FilterCell>
          <FilterRow $tight>
            <Filter label="Einstellungen" value="Alle" />
            <IconButton name="gear" label="Spalten" />
          </FilterRow>
        </FilterCell>
      </tr>
    </thead>
  );
}

function ObjectRow({ row }) {
  const { id, folder, open, focused, func, value, custom } = row;
  const level = row.level || (folder ? 0 : 1);
  const name = row.name || (folder ? '' : id);
  const type = row.type || (folder ? '' : 'state');
  const icon = row.icon || (folder ? null : 'state');

  return (
    <Row $focused={focused}>
      <Cell $flush>
        <TreeNode $level={level} $folder={folder} $focused={focused}>
          <Expander as={folder ? 'button' : 'span'} aria-label={folder ? id : undefined}>
            {folder && <ExpanderIcon open={open} />}
          </Expander>
          <NodeIcon>{folder ? <FolderIcon /> : <PageIcon />}</NodeIcon>
          {id}
        </TreeNode>
      </Cell>
      <Cell $flush>
        <IconBox>{adapterIcons[icon]}</IconBox>
      </Cell>
      <Cell $flush>{name}</Cell>
      <Cell>{type}</Cell>
      <Cell />
      <Cell />
      <Cell>{func}</Cell>
      <ValueCell>{value}</ValueCell>
      <Cell>
        <Actions>
          {name ? (
            <ActionButton aria-label="Bearbeiten">
              <Glyph name="pencil" size={11} />
            </ActionButton>
          ) : (
            <ActionSpacer />
          )}
          <ActionButton aria-label="Löschen">
            <Glyph name="trash" size={11} />
          </ActionButton>
          {!folder && (
            <ActionButton $on={custom} aria-label="Einstellungen">
              <Glyph name="gear" size={10} />
            </ActionButton>
          )}
        </Actions>
      </Cell>
    </Row>
  );
}

function App() {
  return (
    <Page>
      <GlobalStyle />
      <BrowserChrome />
      <Header>
        <Brand>ioBroker.admin</Brand>
        <Tabs>
          {tabs.map((tab) => (
            <Tab key={tab} href="#" $active={tab === 'Objekte'}>
              {tab}
            </Tab>
          ))}
        </Tabs>
        <UserArea>
          <HeaderButton aria-label="Bearbeiten">
            <Glyph name="pencil" size={11} />
          </HeaderButton>
          <UserName>Admin</UserName>
          <HeaderButton aria-label="Einstellungen">
            <Glyph name="gear" size={10} />
          </HeaderButton>
        </UserArea>
      </Header>
      <Main>
        <TreeArea>
          <Table>
            <colgroup>
              <Col $width="436px" />
              <Col $width="23px" />
              <Col />
              <Col span="2" $width="163px" />
              <Col span="3" $width="164px" />
              <Col $width="111px" />
            </colgroup>
            <TableHead />
            <tbody>
              {rows.map((row) => (
                <ObjectRow key={row.id} row={row} />
              ))}
            </tbody>
          </Table>
        </TreeArea>
        <ScrollBar>
          <ScrollButton aria-label="Nach oben">
            <svg width="7" height="4" viewBox="0 0 7 4">
              <path d="M0 4h7L3.500 0z" fill="#777" />
            </svg>
          </ScrollButton>
          <ScrollButton aria-label="Nach unten">
            <svg width="7" height="4" viewBox="0 0 7 4">
              <path d="M0 0h7L3.500 4z" fill="#777" />
            </svg>
          </ScrollButton>
        </ScrollBar>
      </Main>
    </Page>
  );
}

export default App;
